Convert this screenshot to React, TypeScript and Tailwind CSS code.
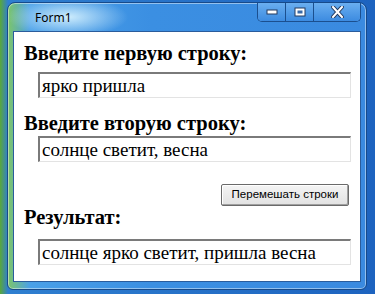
import React from 'react';

function CaptionButtons() {
  return (
    <div className="flex h-[19px] rounded-b-[5px] border border-t-0 border-[#1b4f8f] shadow-[inset_0_0_0_1px_rgba(255,255,255,0.35)] overflow-hidden">
      {/* minimize */}
      <div className="w-[28px] flex items-center justify-center border-r border-[#1b4f8f] bg-[linear-gradient(#6aaef0,#3c8be0)]">
        <svg width="12" height="6" viewBox="0 0 12 6">
          <rect x="1" y="1" width="10" height="4" fill="#fff" stroke="#243a5e" strokeWidth="1" />
        </svg>
      </div>
      {/* maximize */}
      <div className="w-[28px] flex items-center justify-center border-r border-[#1b4f8f] bg-[linear-gradient(#6aaef0,#3c8be0)]">
        <svg width="12" height="10" viewBox="0 0 12 10">
          <rect x="0.5" y="0.5" width="11" height="9" fill="#243a5e" />
          <rect x="1.5" y="1.5" width="9" height="7" fill="#fff" />
          <rect x="3.5" y="3.5" width="5" height="3" fill="#3a6aa8" />
        </svg>
      </div>
      {/* close */}
      <div className="w-[46px] flex items-center justify-center bg-[linear-gradient(#6aaef0,#3c8be0)]">
        <svg width="13" height="12" viewBox="0 0 13 12">
          <path d="M2 1 L11 11 M11 1 L2 11" stroke="#243a5e" strokeWidth="4" strokeLinecap="square" />
          <path d="M2 1 L11 11 M11 1 L2 11" stroke="#fff" strokeWidth="2" strokeLinecap="square" />
        </svg>
      </div>
    </div>
  );
}

function TextBox({ value }: { value: string }) {
  return (
    <div className="ml-[24px] w-[313px] h-[26px] bg-white border-t-2 border-l-2 border-t-[#7a7a7a] border-l-[#7a7a7a] border-b border-r border-b-[#e3e3e3] border-r-[#e3e3e3] pl-[2px] flex items-center text-[19px] leading-none text-black font-['Liberation_Serif',serif] whitespace-nowrap">
      {value}
    </div>
  );
}

function Label({ text }: { text: string }) {
  return (
    <div className="ml-[10px] text-[20.5px] leading-[20px] font-bold text-black font-['Liberation_Serif',serif] whitespace-nowrap">
      {text}
    </div>
  );
}

export default function App() {
  return (
    <div className="w-[375px] h-[294px] overflow-hidden bg-[linear-gradient(90deg,#5aa83a_0px,#2f7fd0_8px,#1d63bf_100%)] pt-[2px] pl-[7px]">
      <div className="w-[360px] h-[288px] rounded-t-[8px] rounded-b-[6px] border border-[#174a8a] bg-[radial-gradient(ellipse_60px_20px_at_60px_14px,rgba(220,245,255,0.9),transparent),linear-gradient(90deg,#7cc56a_0px,#4aa0e8_22px,#3b8fe2_40%,#3a8ae0_100%)] shadow-[inset_0_0_0_1px_rgba(255,255,255,0.45)] flex flex-col">
        {/* title bar */}
        <div className="h-[28px] flex items-start justify-between pl-[27px] pr-[5px]">
          <span className="mt-[6px] text-[12px] text-black font-['Noto_Sans',sans-serif]">Form1</span>
          <CaptionButtons />
        </div>
        {/* client area */}
        <div className="mx-[5px] mb-[7px] flex-1 border border-[#2a5c9c] bg-white flex flex-col">
          <div className="mt-[11px]">
            <Label text="Введите первую строку:" />
          </div>
          <div className="mt-[9px]">
            <TextBox value="ярко пришла" />
          </div>
          <div className="mt-[15px]">
            <Label text="Введите вторую строку:" />
          </div>
          <div className="mt-[3px]">
            <TextBox value="солнце светит, весна" />
          </div>
          <div className="mt-[22px] flex justify-end pr-[11px]">
            <button
              type="button"
              className="w-[128px] h-[22px] border border-[#6a6a6a] rounded-[2px] bg-[linear-gradient(#f4f4f4,#e2e2e2)] shadow-[inset_-1px_-1px_0_#a0a0a0,inset_1px_1px_0_#ffffff] text-[11.5px] text-black font-['Liberation_Sans',sans-serif] leading-none"
            >
              Перемешать строки
            </button>
          </div>
          <div className="mt-[1px]">
            <Label text="Результат:" />
          </div>
          <div className="mt-[12px]">
            <TextBox value="солнце ярко светит, пришла весна" />
          </div>
        </div>
      </div>
    </div>
  );
}
